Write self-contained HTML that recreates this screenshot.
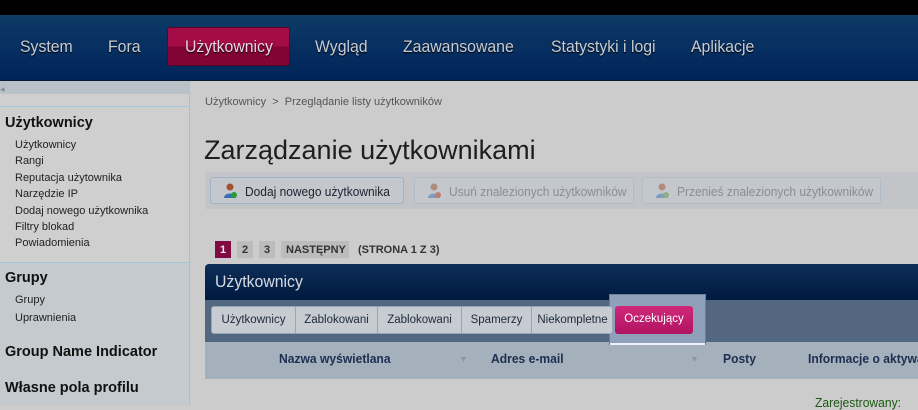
<!DOCTYPE html>
<html><head><meta charset="utf-8"><style>
*{margin:0;padding:0;box-sizing:border-box}
body{width:918px;height:406px;overflow:hidden;background:#cccccc;font-family:"Liberation Sans",sans-serif;position:relative}
.a{position:absolute;white-space:nowrap}
.c{display:inline-block;transform:scaleX(.93);transform-origin:left center}
#top{left:0;top:0;width:918px;height:15px;background:#000}
#nav{left:0;top:15px;width:918px;height:66px;background:linear-gradient(#0e3a66,#00245a);border-bottom:1px solid #0a1a30}
.n{top:37px;font-size:17px;color:#c8ccd2;text-shadow:0 1px 1px #000}
#act{left:167px;top:27px;width:123px;height:39px;background:linear-gradient(#a30c47 50%,#820436 50%);border:1px solid #5a0428;border-radius:3px}
#side{left:0;top:81px;width:190px;height:325px;background:#cfcfcf;border-right:1px solid #9fc4d0}
.sl{font-size:11px;color:#222;left:15px}
.sh{font-size:14.5px;font-weight:bold;color:#111;left:5px}
.btn{top:177px;height:27px;border:1px solid #9fb4c8;border-radius:3px;background:#c4c8cc;font-size:13px;padding:6px 0 0 34px;color:#223;overflow:hidden}
.btn.d{color:#8a8e94;border-color:#b0bcc8}
.btn .c{transform:scaleX(.92)}
.ic{position:absolute;left:12px;top:5px;width:14px;height:16px}
.pg{top:241px;height:17px;font-size:11px;font-weight:bold;background:#bcbcbc;color:#333;padding:3px 5px 0}
.tab{top:307px;height:26px;font-size:11.5px;color:#1e2a3a;border-right:1px solid #9aa6b4;padding-top:7px;text-align:center}
.th{top:351px;font-size:13px;font-weight:bold;color:#1d2e50}
</style></head><body>
<div class="a" id="top"></div>
<div class="a" id="nav"></div>
<div class="a" id="act"></div>
<div class="a n" style="left:20px"><span class="c">System</span></div>
<div class="a n" style="left:108px"><span class="c">Fora</span></div>
<div class="a n" style="left:185px;color:#e8d8e0"><span class="c">Użytkownicy</span></div>
<div class="a n" style="left:315px"><span class="c">Wygląd</span></div>
<div class="a n" style="left:403px"><span class="c">Zaawansowane</span></div>
<div class="a n" style="left:551px"><span class="c">Statystyki i logi</span></div>
<div class="a n" style="left:691px"><span class="c">Aplikacje</span></div>

<div class="a" id="side"></div>
<div class="a" style="left:0;top:81px;width:190px;height:13px;background:#b8c2c8"></div>
<div class="a" style="left:0;top:84px;font-size:9px;color:#889">◂</div>
<div class="a" style="left:0;top:106px;width:190px;height:1px;background:#9fc8d8"></div>
<div class="a" style="left:0;top:262px;width:190px;height:144px;background:#c4cacd;border-top:1px solid #9fc8d8;border-right:1px solid #9fc4d0"></div>
<div class="a sh" style="top:115px">Użytkownicy</div>
<div class="a sl" style="top:139px">Użytkownicy</div>
<div class="a sl" style="top:155px">Rangi</div>
<div class="a sl" style="top:172px">Reputacja użytownika</div>
<div class="a sl" style="top:188px">Narzędzie IP</div>
<div class="a sl" style="top:205px">Dodaj nowego użytkownika</div>
<div class="a sl" style="top:221px">Filtry blokad</div>
<div class="a sl" style="top:237px">Powiadomienia</div>
<div class="a sh" style="top:270px">Grupy</div>
<div class="a sl" style="top:294px">Grupy</div>
<div class="a sl" style="top:312px">Uprawnienia</div>
<div class="a sh" style="top:344px">Group Name Indicator</div>
<div class="a sh" style="top:380px">Własne pola profilu</div>

<div class="a" style="left:205px;top:96px;font-size:11px;color:#555">Użytkownicy &nbsp;&gt;&nbsp; Przeglądanie listy użytkowników</div>
<div class="a" style="left:204px;top:135px;font-size:27px;color:#1e1e1e">Zarządzanie użytkownikami</div>
<div class="a" style="left:205px;top:172px;width:713px;height:37px;background:#c2c4c8"></div>
<div class="a btn" style="left:210px;width:194px"><svg class="ic" viewBox="0 0 14 16"><circle cx="7" cy="4" r="3.5" fill="#a0522d"/><path d="M1 15c0-6 12-6 12 0z" fill="#3a6eb0"/><circle cx="11" cy="12" r="3" fill="#2a9a3a"/></svg><span class="c">Dodaj nowego użytkownika</span></div>
<div class="a btn d" style="left:414px;width:220px"><svg class="ic" viewBox="0 0 14 16" opacity=".5"><circle cx="7" cy="4" r="3.5" fill="#a0522d"/><path d="M1 15c0-6 12-6 12 0z" fill="#3a6eb0"/><circle cx="11" cy="12" r="3" fill="#c03020"/></svg><span class="c">Usuń znalezionych użytkowników</span></div>
<div class="a btn d" style="left:642px;width:239px"><svg class="ic" viewBox="0 0 14 16" opacity=".5"><circle cx="7" cy="4" r="3.5" fill="#a0522d"/><path d="M1 15c0-6 12-6 12 0z" fill="#3a6eb0"/><circle cx="11" cy="12" r="3" fill="#5a9a3a"/></svg><span class="c">Przenieś znalezionych użytkowników</span></div>

<div class="a pg" style="left:215px;background:#820a42;color:#eee">1</div>
<div class="a pg" style="left:237px">2</div>
<div class="a pg" style="left:259px">3</div>
<div class="a pg" style="left:281px;width:68px">NASTĘPNY</div>
<div class="a" style="left:358px;top:244px;font-size:11px;font-weight:bold;color:#333">(STRONA 1 Z 3)</div>

<div class="a" style="left:205px;top:264px;width:713px;height:36px;background:linear-gradient(#0e2e58,#001a40);border-radius:4px 0 0 0"></div>
<div class="a" style="left:215px;top:272px;font-size:17px;color:#d8dce2"><span class="c">Użytkownicy</span></div>
<div class="a" style="left:205px;top:300px;width:713px;height:42px;background:#536781"></div>
<div class="a" style="left:205px;top:342px;width:713px;height:37px;background:#a4b0bc"></div>
<div class="a" style="left:609px;top:294px;width:97px;height:51px;background:#8ea0ba;border:1px solid #6c7e96"></div>
<div class="a" style="left:211px;top:306px;width:402px;height:28px;border:1px solid #98a4b2;border-radius:3px;background:#c6ccd2"></div>
<div class="a tab" style="left:212px;width:84px">Użytkownicy</div>
<div class="a tab" style="left:296px;width:82px">Zablokowani</div>
<div class="a tab" style="left:378px;width:84px">Zablokowani</div>
<div class="a tab" style="left:462px;width:70px">Spamerzy</div>
<div class="a tab" style="left:532px;width:81px;border-right:0">Niekompletne</div>
<div class="a" style="left:615px;top:306px;width:78px;height:28px;background:linear-gradient(#d0287a,#b01462);border-radius:3px;color:#fff;font-size:11.5px;text-align:center;padding-top:7px">Oczekujący</div>
<div class="a" style="left:610px;top:343px;width:95px;height:2px;background:#eef2f8"></div>
<div class="a th" style="left:279px"><span class="c">Nazwa wyświetlana</span></div>
<div class="a" style="left:459px;top:354px;font-size:9px;color:#8a96a4">▼</div>
<div class="a th" style="left:491px"><span class="c">Adres e-mail</span></div>
<div class="a" style="left:690px;top:354px;font-size:9px;color:#8a96a4">▼</div>
<div class="a th" style="left:723px"><span class="c">Posty</span></div>
<div class="a th" style="left:808px"><span class="c">Informacje o aktywacji</span></div>
<div class="a" style="left:815px;top:395px;font-size:13px;color:#1a5a10"><span class="c">Zarejestrowany:</span></div>
</body></html>
